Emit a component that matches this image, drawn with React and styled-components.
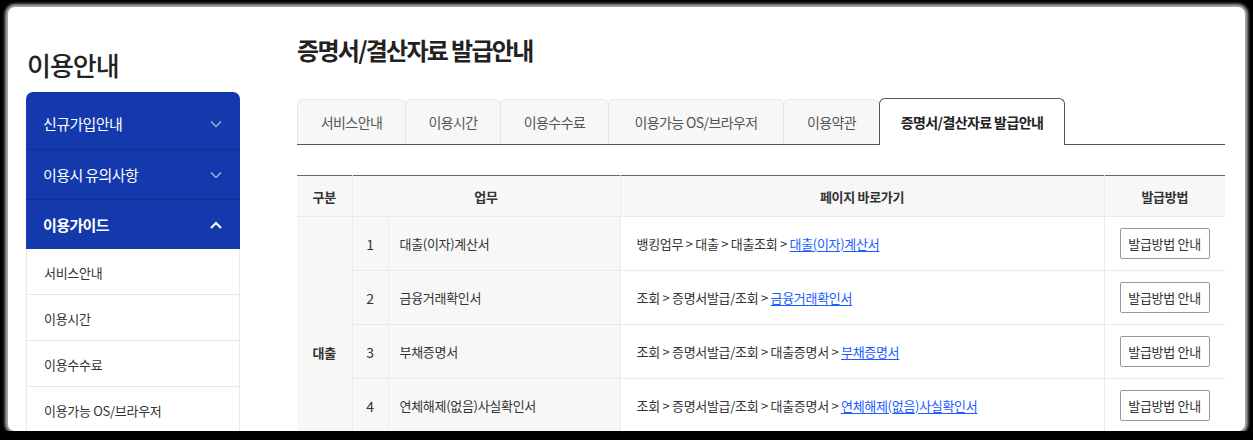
import React from "react";
import styled, { createGlobalStyle } from "styled-components";

const GlobalStyle = createGlobalStyle`
  html, body {
    margin: 0;
    padding: 0;
    background: #000;
    font-family: "Noto Sans CJK KR", "Noto Sans", sans-serif;
    color: #222;
  }
  * { box-sizing: border-box; }
`;

const Panel = styled.div`
  margin: 7px 8px 0 8px;
  height: 424px;
  overflow: hidden;
  background: #fff;
  border-radius: 7px;
  box-shadow: 0 0 3px 3px rgba(190, 190, 190, 0.9);
  display: flex;
`;

const Side = styled.aside`
  width: 214px;
  margin-left: 18px;
  flex-shrink: 0;
`;

const SideTitle = styled.h2`
  margin: 42px 0 0 1px;
  height: 43px;
  font-size: 26px;
  font-weight: 500;
  letter-spacing: -1px;
  color: #222;
  line-height: 1.2;
`;

const Menu = styled.div`
  border-radius: 7px 7px 0 0;
  overflow: hidden;
`;

const MenuRow = styled.div`
  display: flex;
  align-items: center;
  justify-content: space-between;
  height: ${(p) => (p.$first ? 57 : 50)}px;
  padding: ${(p) => (p.$first ? "6px" : "0")} 18px 0 17px;
  background: #1339ad;
  color: #fff;
  font-size: 15px;
  font-weight: ${(p) => (p.$open ? 700 : 400)};
  letter-spacing: -0.6px;
  border-top: ${(p) => (p.$first ? "none" : "1px solid #0d2f98")};
`;

const SubRow = styled.div`
  height: 46px;
  display: flex;
  align-items: center;
  padding: 2px 0 0 17px;
  font-size: 13px;
  color: #333;
  letter-spacing: -0.3px;
  border-left: 1px solid #e8e8e8;
  border-right: 1px solid #e8e8e8;
  border-bottom: 1px solid #e8e8e8;
`;

const Main = styled.main`
  margin-left: 57px;
  width: 928px;
  flex-shrink: 0;
`;

const PageTitle = styled.h1`
  margin: 26px 0 0 0;
  height: 58px;
  font-size: 24px;
  font-weight: 700;
  letter-spacing: -1.7px;
  color: #222;
  line-height: 1.4;
`;

const Tabs = styled.div`
  display: flex;
  align-items: flex-end;
  height: 54px;
  border-bottom: 1px solid #555;
`;

const Tab = styled.div`
  height: ${(p) => (p.$active ? 47 : 45)}px;
  padding: 0 19px;
  display: flex;
  align-items: center;
  justify-content: center;
  font-size: 14px;
  letter-spacing: -0.6px;
  border: 1px solid ${(p) => (p.$active ? "#555" : "#e8e8e8")};
  border-bottom: none;
  border-radius: 6px 6px 0 0;
  background: ${(p) => (p.$active ? "#fff" : "#f7f7f7")};
  color: ${(p) => (p.$active ? "#222" : "#555")};
  font-weight: ${(p) => (p.$active ? 700 : 400)};
  margin-bottom: ${(p) => (p.$active ? "-1px" : "0")};
  margin-left: -1px;
  width: ${(p) => p.$w}px;
  &:first-child { margin-left: 0; }
`;

const Table = styled.table`
  margin-top: 30px;
  width: 928px;
  border-collapse: collapse;
  border-top: 1px solid #666;
  table-layout: fixed;
  font-size: 13px;
  letter-spacing: -0.3px;
  color: #333;
`;

const Th = styled.th`
  height: 41px;
  background: #f7f7f7;
  font-weight: 700;
  color: #333;
  border: 1px solid #e8eaed;
  border-top: none;
  &:first-child { border-left: none; }
  &:last-child { border-right: none; }
`;

const Td = styled.td`
  height: 54px;
  border: 1px solid #e8eaed;
  background: ${(p) => (p.$grey ? "#f7f7f7" : "#fff")};
  text-align: ${(p) => p.$align || "left"};
  padding: ${(p) => p.$pad || "0"};
  font-weight: ${(p) => (p.$bold ? 700 : 400)};
  font-size: ${(p) => (p.$num ? "14px" : "13px")};
  &:last-child { border-right: none; }
`;

const GroupCell = styled(Td)`
  border-left: none;
  padding-top: 56px;
`;

const Link = styled.a`
  color: #1a5cff;
  text-decoration: underline;
  text-underline-offset: 2px;
`;

const Btn = styled.button`
  width: 90px;
  height: 31px;
  border: 1px solid #999;
  border-radius: 2px;
  background: #fff;
  font-family: inherit;
  font-size: 13px;
  letter-spacing: -0.3px;
  color: #333;
  padding: 0;
`;

const Chevron = ({ up }) => (
  <svg width="12" height="8" viewBox="0 0 12 8">
    <polyline
      points={up ? "1,7 6,2 11,7" : "1,1.5 6,6.5 11,1.5"}
      fill="none"
      stroke={up ? "#fff" : "rgba(255,255,255,0.6)"}
      strokeWidth={up ? 2 : 1.5}
    />
  </svg>
);

const rows = [
  { n: 1, name: "대출(이자)계산서", path: "뱅킹업무 > 대출 > 대출조회 > ", link: "대출(이자)계산서" },
  { n: 2, name: "금융거래확인서", path: "조회 > 증명서발급/조회 > ", link: "금융거래확인서" },
  { n: 3, name: "부채증명서", path: "조회 > 증명서발급/조회 > 대출증명서 > ", link: "부채증명서" },
  { n: 4, name: "연체해제(없음)사실확인서", path: "조회 > 증명서발급/조회 > 대출증명서 > ", link: "연체해제(없음)사실확인서" },
];

const tabs = [
  ["서비스안내", 109],
  ["이용시간", 96],
  ["이용수수료", 109],
  ["이용가능 OS/브라우저", 176],
  ["이용약관", 97],
  ["증명서/결산자료 발급안내", 186],
];

export default function App() {
  return (
    <>
      <GlobalStyle />
      <Panel>
        <Side>
          <SideTitle>이용안내</SideTitle>
          <Menu>
            <MenuRow $first>
              신규가입안내 <Chevron />
            </MenuRow>
            <MenuRow>
              이용시 유의사항 <Chevron />
            </MenuRow>
            <MenuRow $open>
              이용가이드 <Chevron up />
            </MenuRow>
          </Menu>
          <SubRow>서비스안내</SubRow>
          <SubRow>이용시간</SubRow>
          <SubRow>이용수수료</SubRow>
          <SubRow>이용가능 OS/브라우저</SubRow>
        </Side>
        <Main>
          <PageTitle>증명서/결산자료 발급안내</PageTitle>
          <Tabs>
            {tabs.map(([t, w], i) => (
              <Tab key={t} $w={w} $active={i === tabs.length - 1}>
                {t}
              </Tab>
            ))}
          </Tabs>
          <Table>
            <colgroup>
              <col style={{ width: 55 }} />
              <col style={{ width: 36 }} />
              <col style={{ width: 232 }} />
              <col style={{ width: 484 }} />
              <col style={{ width: 121 }} />
            </colgroup>
            <thead>
              <tr>
                <Th>구분</Th>
                <Th colSpan={2}>업무</Th>
                <Th>페이지 바로가기</Th>
                <Th>발급방법</Th>
              </tr>
            </thead>
            <tbody>
              {rows.map((r, i) => (
                <tr key={r.n}>
                  {i === 0 && (
                    <GroupCell rowSpan={rows.length} $grey $bold $align="center">
                      대출
                    </GroupCell>
                  )}
                  <Td $grey $num $align="center">{r.n}</Td>
                  <Td $grey $pad="0 0 0 11px">{r.name}</Td>
                  <Td $pad="0 0 0 16px">
                    {r.path}
                    <Link href="#">{r.link}</Link>
                  </Td>
                  <Td $pad="0 0 0 15px">
                    <Btn>발급방법 안내</Btn>
                  </Td>
                </tr>
              ))}
            </tbody>
          </Table>
        </Main>
      </Panel>
    </>
  );
}
